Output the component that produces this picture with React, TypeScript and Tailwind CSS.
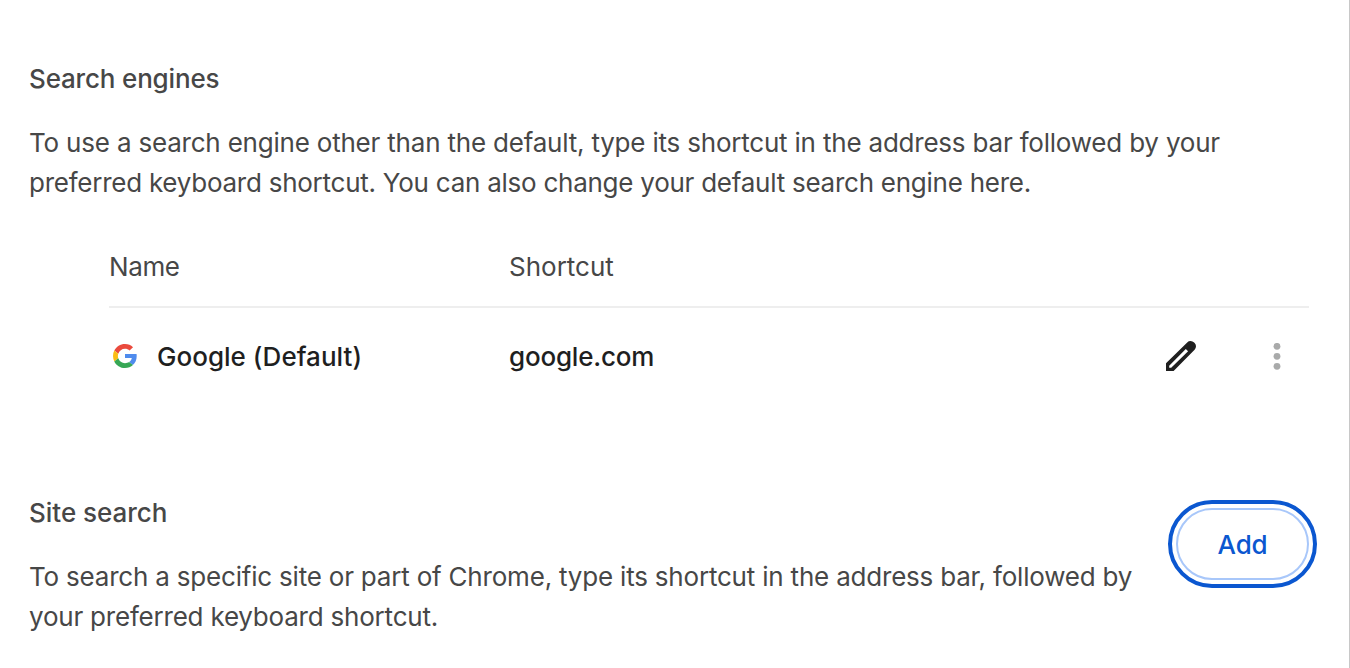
const heading = "whitespace-nowrap text-[26px] font-medium leading-10 text-[#474747]";
const body = "mt-6 whitespace-nowrap text-[26px] leading-10 text-[#474747]";

function GoogleIcon() {
  return (
    <svg className="size-6" viewBox="0 0 48 48" aria-hidden="true">
      <path fill="#ea4a3d" d="M24 9.5c3.54 0 6.71 1.22 9.21 3.6l6.85-6.85C35.9 2.38 30.47 0 24 0 14.62 0 6.51 5.38 2.56 13.22l7.98 6.19C12.43 13.72 17.74 9.5 24 9.5z" />
      <path fill="#4f8bed" d="M47.4 24c0-1.4-.1-2.7-.3-4H24v8h13.6c-.6 3.2-2.4 6.2-5.2 8.2l7.3 6c4.9-4.4 7.7-10.6 7.7-18.2z" />
      <path fill="#fbbc13" d="M10.53 28.59c-.48-1.45-.76-2.99-.76-4.59s.27-3.14.76-4.59l-7.98-6.19C.92 16.46 0 20.12 0 24s.92 7.54 2.56 10.78l7.97-6.19z" />
      <path fill="#37a755" d="M24 48c6.48 0 11.93-2.13 15.89-5.81l-7.73-6c-2.15 1.45-4.92 2.3-8.16 2.3-6.26 0-11.57-4.22-13.47-9.91l-7.98 6.19C6.51 42.62 14.62 48 24 48z" />
    </svg>
  );
}

function EditIcon() {
  return (
    <svg className="h-[30px] w-[30px]" viewBox="0 0 30 30" fill="#1f1f1f" aria-hidden="true">
      <path fillRule="evenodd" d="M0 30V22.3L21.2 1.4Q22.6 0 24.6 0Q26.6 0 28.1 1.5L28.6 2Q30 3.4 30 5.3Q30 7.3 28.6 8.7L7.6 30ZM3.2 26.8H5.2L22.1 10.2L19.8 7.9L3.2 24.7Z" />
    </svg>
  );
}

function MoreIcon() {
  return (
    <svg className="h-[27px] w-[8px]" viewBox="0 0 8 27" fill="#a9aaaa" aria-hidden="true">
      <circle cx="4" cy="3.3" r="3.4" />
      <circle cx="4" cy="13.3" r="3.4" />
      <circle cx="4" cy="23.3" r="3.4" />
    </svg>
  );
}

export default function App() {
  return (
    <main className="h-[668px] w-[1350px] overflow-hidden border-r border-[#c8c8c8] bg-white pl-[29px] pt-[59px] font-['Inter',sans-serif]">
      <section>
        <h2 className={heading}><span className="tracking-[-0.17px]">Search engines</span></h2>
        <p className={body}>
          <span className="tracking-[-0.22px] [word-spacing:0.1px]">To use a search engine other than the default, type its shortcut in the address bar followed by your</span>
          <br />
          <span className="tracking-[-0.25px]">preferred keyboard shortcut. You can also change your default search engine here.</span>
        </p>
        <div className="ml-20 mt-11 w-[1200px] text-[26px] leading-10">
          <div className="flex h-[61px] border-b-2 border-[#eeeeee] text-[#474747]">
            <div className="w-[400px] tracking-[-0.4px]">Name</div>
            <div>Shortcut</div>
          </div>
          <div className="flex h-24 items-center font-medium text-[#1f1f1f]">
            <div className="flex w-[400px] items-center gap-5 pl-1">
              <GoogleIcon />
              <span className="pt-0.5 tracking-[0.02px]">Google (Default)</span>
            </div>
            <span className="grow pt-0.5 tracking-[-0.2px]">google.com</span>
            <button className="mr-[77px]" aria-label="Edit"><EditIcon /></button>
            <button className="mr-[28px]" aria-label="More actions"><MoreIcon /></button>
          </div>
        </div>
      </section>
      <section className="mt-[89px] flex">
        <div className="w-[1147px]">
          <h2 className={heading}><span className="tracking-[-0.02px]">Site search</span></h2>
          <p className={body}>
            <span className="tracking-[-0.2px]">To search a specific site or part of Chrome, type its shortcut in the address bar, followed by</span>
            <br />
            <span className="tracking-[-0.21px]">your preferred keyboard shortcut.</span>
          </p>
        </div>
        <button className="mt-[15px] h-[72px] w-[133px] rounded-full border-2 border-[#a8c7fa] text-[26px] font-medium tracking-[-0.2px] text-[#0b57d0] outline-4 outline-offset-4 outline-[#0b57d0]">Add</button>
      </section>
    </main>
  );
}
